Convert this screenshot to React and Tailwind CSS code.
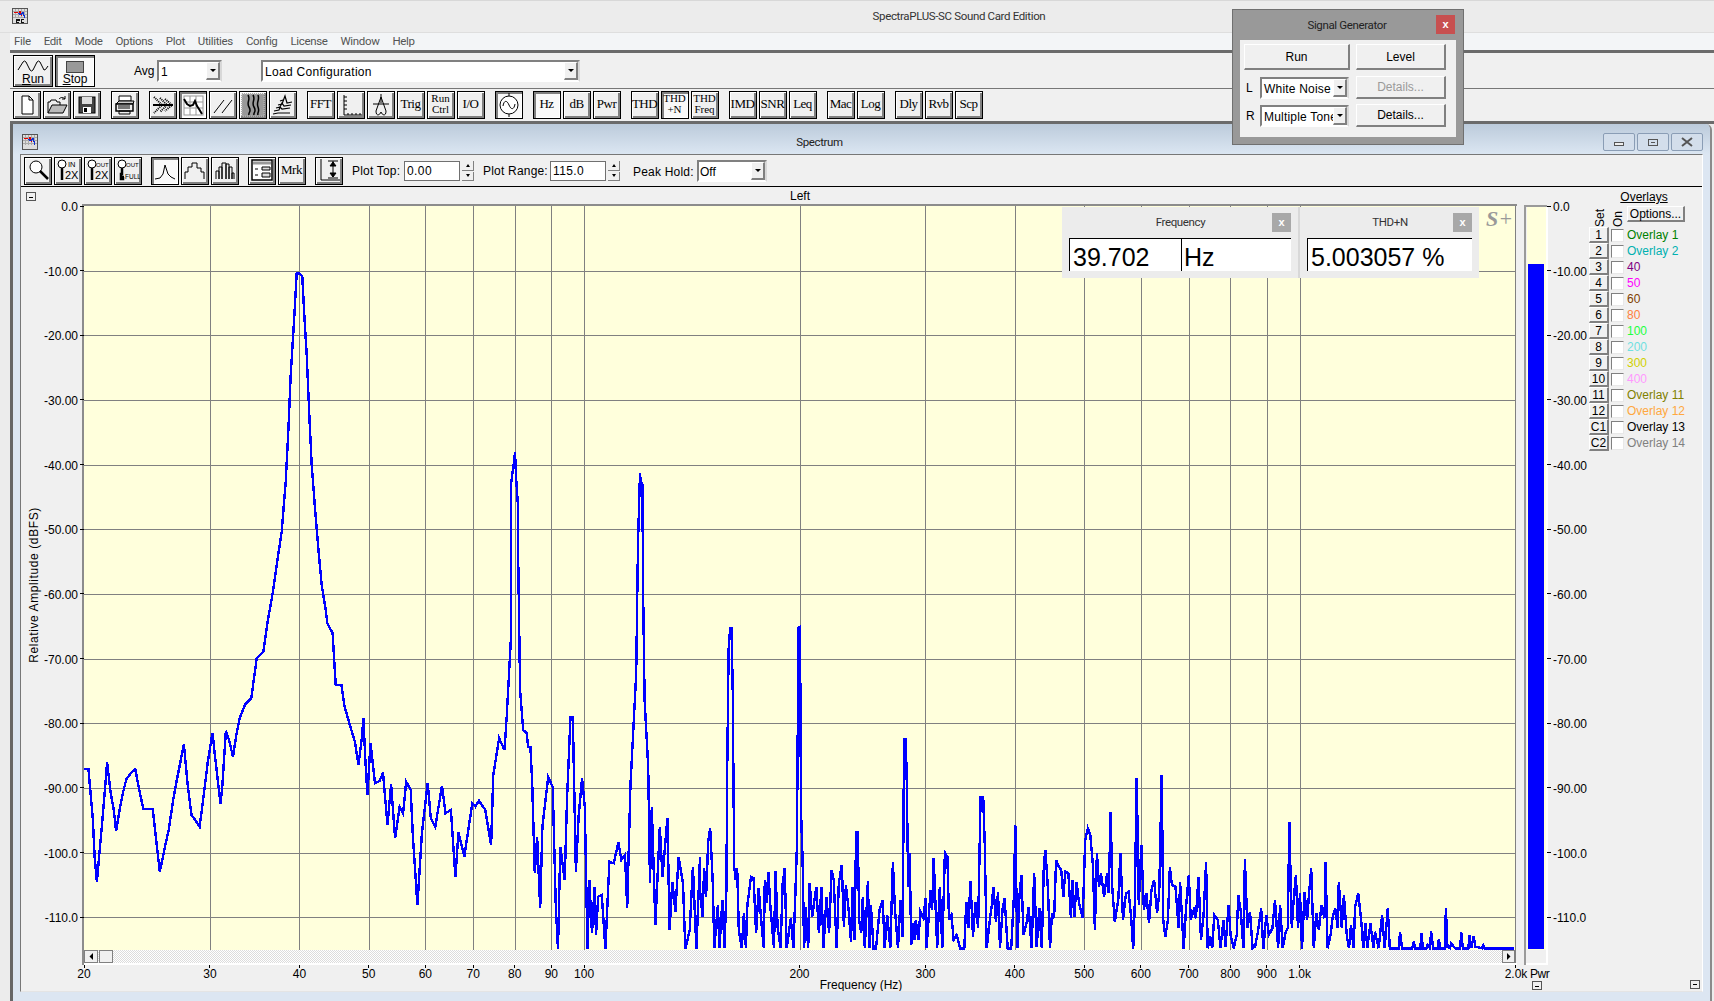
import React from 'react';

// trace points read off the plot, three stretches at different scales
const fromA = (p) => p.map(([x, y]) => [x / 2.24, 600 + y / 3]);
const fromB = (p) => p.map(([x, y]) => [270 + x / 3, 265 + y / 3]);
const fromC = (p) => p.map(([x, y]) => [700 + x / 1.96, 600 + y / 3]);

const trace = [
  ...fromA([[188,507],[198,507],[203,580],[208,660],[212,770],[217,845],[222,770],[230,650],[235,570],[240,487],[248,580],[255,630],[260,693],[268,630],[275,580],[283,538],[293,520],[303,508],[312,570],[321,627],[342,627],[350,720],[358,815],[368,750],[378,690],[388,600],[396,540],[405,480],[412,433],[420,550],[429,645],[440,665],[447,680],[455,600],[465,490],[476,398],[480,450],[487,530],[494,612],[498,560],[506,392],[513,420],[522,470],[530,400],[537,355],[549,313],[563,295],[575,175],[590,155],[600,60]]),
  ...fromB([[0,1030],[8,985],[20,900],[35,800],[47,650],[55,500],[62,330],[72,170],[80,25],[88,25],[97,35],[103,150],[110,270],[118,450],[125,600],[135,730],[145,850],[155,960],[168,1040]]),
  ...fromA([[733,68],[745,100],[752,255],[765,255],[772,320],[785,380],[795,425],[803,495],[810,420],[814,355],[818,470],[823,585],[830,430],[840,550],[850,543],[858,518],[868,675],[876,553],[885,715],[895,620],[903,640],[910,545],[920,570],[925,710],[935,915],[945,700],[958,548],[965,655],[975,680],[990,557],[998,640],[1010,630],[1020,830],[1027,697],[1040,770],[1058,610],[1065,620],[1073,602],[1087,630],[1100,735],[1105,525],[1118,415],[1130,450],[1135,350],[1145,100]]),
  ...fromB([[724,650],[732,590],[735,560],[738,632],[743,710],[745,900]]),
  ...fromA([[1165,270],[1172,390],[1180,400],[1183,440],[1188,440],[1192,540],[1198,820],[1203,710],[1210,925],[1215,680],[1228,532],[1238,560],[1245,920],[1250,1048],[1255,740],[1265,840],[1270,600],[1278,350],[1283,350],[1290,815],[1296,650],[1304,535],[1310,620],[1316,1048],[1320,840],[1326,1000],[1332,860],[1335,1005],[1340,890],[1348,885],[1356,1048],[1365,785],[1375,790],[1385,727],[1392,780],[1400,765],[1405,925],[1412,560],[1425,220]]),
  ...fromB([[1104,835],[1107,730],[1110,625],[1113,660],[1117,650],[1120,1020]]),
  ...fromA([[1444,300],[1452,500],[1456,850],[1460,620],[1468,975],[1478,680],[1484,830],[1495,655],[1500,990],[1506,845],[1513,935],[1520,770],[1530,850],[1535,1048],[1545,990],[1552,800],[1560,1048],[1568,770]]),
  ...fromC([[0,870],[5,950],[8,805],[12,890],[16,725],[20,685],[25,850],[28,1045],[35,915],[38,1045],[44,900],[48,1045],[52,860],[53,565],[56,150],[59,85],[62,85],[64,270],[67,800],[70,840],[73,805],[76,990],[82,1045],[86,940],[90,1045],[93,915],[100,830],[105,835],[110,1000],[115,865],[120,960],[125,1045],[127,840],[130,910],[134,815],[138,920],[145,1045],[148,812],[152,980],[158,1045],[162,850],[166,805],[170,1045],[178,955],[183,1045],[187,880],[190,740],[193,83],[196,80],[198,630],[201,780],[204,1045],[207,920],[212,1045],[215,850],[220,950],[228,860],[233,1000],[238,860],[242,1045],[248,890],[253,1000],[258,810],[262,840],[268,1045],[272,850],[278,795],[282,980],[286,855],[291,925],[296,1025],[299,860],[303,1020],[306,695],[309,695],[312,960],[316,1000],[319,890],[323,1045],[326,950],[329,842],[332,1045],[335,915],[340,1045],[345,1045],[352,930],[358,900],[362,1045],[367,945],[373,1045],[378,787],[382,925],[388,1045],[393,900],[397,1010],[400,418],[403,418],[405,515],[408,860],[411,760],[414,1035],[417,970],[420,1020],[423,960],[428,1020],[432,935],[438,955],[442,895],[444,1045],[452,870],[455,930],[458,775],[461,890],[465,1045],[470,860],[475,1045],[480,758],[485,770],[488,960],[493,945],[497,1020],[503,1005],[510,1045],[518,1045],[522,905],[526,985],[530,842],[535,1010],[540,905],[545,985],[550,590],[555,590],[558,730],[562,1045],[568,960],[572,915],[575,860],[580,965],[584,875],[588,1045],[593,925],[597,895],[603,1045],[610,1045],[615,895],[618,675],[622,1045],[626,890],[630,825],[634,1005],[640,970],[644,920],[650,1045],[655,820],[660,1040],[665,925],[670,1045],[674,790],[677,750],[682,870],[686,1045],[690,940],[694,955],[698,780],[703,800],[708,810],[712,890],[716,815],[722,820],[727,955],[730,840],[734,950],[738,845],[743,910],[750,955],[755,720],[760,685],[765,705],[770,795],[774,990],[778,758],[782,860],[786,820],[792,890],[798,820],[801,880],[805,635],[808,860],[813,965],[820,895],[824,758],[829,960],[835,880],[840,875],[845,950],[849,1048],[852,920],[856,535],[860,915],[865,735],[870,930],[875,880],[880,970],[885,870],[890,840],[896,940],[900,880],[905,525],[908,960],[912,1010],[917,960],[921,800],[925,855],[932,860],[938,985],[941,845],[948,1048],[953,915],[958,825],[962,960],[968,930],[972,955],[977,830],[982,1020],[987,945],[992,785],[995,1045],[1000,1010],[1004,1045],[1008,945],[1015,960],[1020,1045],[1026,960],[1030,1040],[1036,915],[1040,1005],[1046,1045],[1052,1005],[1055,885],[1060,935],[1065,1045],[1068,778],[1073,985],[1078,935],[1083,1045],[1088,1040],[1094,990],[1100,925],[1104,1048],[1110,945],[1115,1005],[1122,985],[1127,900],[1133,1045],[1137,915],[1142,1045],[1148,995],[1152,985],[1155,665],[1160,985],[1164,890],[1168,825],[1172,985],[1176,880],[1180,1048],[1185,875],[1190,960],[1194,875],[1198,805],[1203,1045],[1208,940],[1213,990],[1218,915],[1224,955],[1226,785],[1230,1045],[1236,1005],[1240,950],[1245,925],[1250,985],[1252,845],[1258,985],[1262,885],[1268,1010],[1272,1045],[1276,975],[1281,1045],[1284,920],[1290,880],[1296,960],[1300,1045],[1304,970],[1308,1045],[1314,970],[1320,1045],[1323,995],[1330,1045],[1337,945],[1342,1045],[1348,925],[1352,1045],[1370,1045],[1372,995],[1376,1045],[1396,1045],[1399,1025],[1402,1045],[1412,1045],[1414,1000],[1417,1045],[1424,1045],[1426,1035],[1431,1045],[1433,993],[1437,1045],[1446,1045],[1448,1018],[1451,1045],[1460,1045],[1462,925],[1465,1040],[1470,1045],[1472,1030],[1480,1045],[1490,1045],[1492,995],[1495,1045],[1506,1045],[1508,1005],[1512,1045],[1516,1008],[1520,1040],[1533,1045],[1535,1036],[1538,1045],[1595,1045]]),
];

const PLOT = { left: 84, right: 1515, top: 206, bottom: 950 };
const xOf = (f) => PLOT.left + 715.5 * Math.log10(f / 20);
const yOf = (db) => PLOT.top + 6.466 * db;

const gridFreqs = [30, 40, 50, 60, 70, 80, 90, 100, 200, 300, 400, 500, 600, 700, 800, 900, 1000];
const xLabels = [[20, '20'], [30, '30'], [40, '40'], [50, '50'], [60, '60'], [70, '70'], [80, '80'], [90, '90'], [100, '100'], [200, '200'], [300, '300'], [400, '400'], [500, '500'], [600, '600'], [700, '700'], [800, '800'], [900, '900'], [1000, '1.0k'], [2000, '2.0k']];
const dbLabels = [[0, '0.0'], [10, '-10.00'], [20, '-20.00'], [30, '-30.00'], [40, '-40.00'], [50, '-50.00'], [60, '-60.00'], [70, '-70.00'], [80, '-80.00'], [90, '-90.00'], [100, '-100.0'], [110, '-110.0']];

const overlays = [
  ['1', 'Overlay 1', 'text-[#008000]'],
  ['2', 'Overlay 2', 'text-[#00b0b0]'],
  ['3', '40', 'text-[#800080]'],
  ['4', '50', 'text-[#ff00ff]'],
  ['5', '60', 'text-[#804000]'],
  ['6', '80', 'text-[#ff8040]'],
  ['7', '100', 'text-[#20ff40]'],
  ['8', '200', 'text-[#70e0e0]'],
  ['9', '300', 'text-[#d0d000]'],
  ['10', '400', 'text-[#ff99ff]'],
  ['11', 'Overlay 11', 'text-[#808000]'],
  ['12', 'Overlay 12', 'text-[#ffa840]'],
  ['C1', 'Overlay 13', 'text-black'],
  ['C2', 'Overlay 14', 'text-[#808080]'],
];

const raised = 'bg-[#f0f0f0] border border-black shadow-[inset_1px_1px_0_#fff,inset_-2px_-2px_0_#808080]';
const pressed = 'bg-[#f9f9f9] border border-black shadow-[inset_2px_2px_0_#808080,inset_-1px_-1px_0_#fff]';
const flatBtn = 'bg-[#f0f0f0] border-t border-l border-t-white border-l-white border-b-2 border-r-2 border-b-[#808080] border-r-[#808080] flex items-center justify-center';
const uiFont = "font-['Roboto',sans-serif] text-[11.5px] tracking-[-0.35px]";

const Tb = ({ active, group, children }) => (
  <div className={`w-[28px] h-[28px] shrink-0 flex items-center justify-center ${active ? pressed : raised} ${group ? 'ml-[8px]' : ''}`}>
    {children}
  </div>
);

const Label = ({ lines }) => (
  <div className={`font-['Liberation_Serif',serif] text-center text-black pb-[2px] pr-[1px] ${lines.length > 1 ? 'text-[11px] leading-[11px]' : 'text-[13px] leading-[14px] tracking-[-0.5px]'}`}>
    {lines.map((l) => <div key={l}>{l}</div>)}
  </div>
);

const Ico = ({ children }) => (
  <svg width="24" height="24" viewBox="0 0 24 24" fill="none" stroke="black" strokeWidth="1" className="-mt-[1px] -ml-[1px]">
    {children}
  </svg>
);

const Dropdown = ({ className }) => (
  <div className={`w-[14px] bg-[#f0f0f0] border-t border-l border-t-white border-l-white border-b-2 border-r-2 border-b-[#808080] border-r-[#808080] flex items-center justify-center shrink-0 ${className || ''}`}>
    <div className="w-0 h-0 border-l-[3px] border-r-[3px] border-t-[3px] border-l-transparent border-r-transparent border-t-black" />
  </div>
);

const Combo = ({ value, className, textClass }) => (
  <div className={`flex bg-white border-2 border-t-[#808080] border-l-[#808080] border-r-[#d8d8d8] border-b-[#fff] ${className}`}>
    <div className={`flex-1 overflow-hidden whitespace-nowrap px-[1px] text-[12px] leading-[20px] text-black ${textClass || ''}`}>{value}</div>
    <Dropdown />
  </div>
);

const Spin = () => (
  <div className="w-[12px] h-[20px] mt-[1px] flex flex-col gap-[1px] shrink-0">
    <div className="flex-1 bg-[#f0f0f0] border-b border-r border-[#808080] flex items-center justify-center">
      <div className="w-0 h-0 border-l-[2px] border-r-[2px] border-b-[3px] border-l-transparent border-r-transparent border-b-black" />
    </div>
    <div className="flex-1 bg-[#f0f0f0] border-b border-r border-[#808080] flex items-center justify-center">
      <div className="w-0 h-0 border-l-[2px] border-r-[2px] border-t-[3px] border-l-transparent border-r-transparent border-t-black" />
    </div>
  </div>
);

const AppIcon = ({ sc }) => (
  <svg width="16" height="16" viewBox="0 0 16 16" shapeRendering="crispEdges" className="shrink-0">
    <rect x="0.5" y="0.5" width="15" height="15" fill="#ddd" stroke="#555" />
    <path d="M3 1v10M6 1v10M9 1v10M12 1v10M1 3h14M1 6h14M1 9h14" stroke="#aaa" />
    <path d="M2 5l3-1 2 2 1-3 2 5" stroke="#e00000" fill="none" />
    <path d="M6 5l3 2 2-3 2 7" stroke="#1030d0" fill="none" />
    {sc && <rect x="3" y="10" width="10" height="5" fill="#ddd" />}
    {sc && <path d="M4 11h3v1H4v2h3M12 11H9v3h3" stroke="#111" fill="none" />}
  </svg>
);

const Grid2 = () => (
  <Ico>
    <rect x="3" y="3" width="19" height="19" fill="white" stroke="#999" />
    <path d="M9 3v19M15 3v19M3 9h19M3 15h19" stroke="#999" />
    <path d="M3 6l3 5 3 2 3-1 2-4 2 5 2 3 3 5" strokeWidth="2" />
  </Ico>
);

const Zoomer = ({ top, bottom, key2 }) => (
  <Ico>
    <circle cx="6" cy="6" r="4" fill="white" />
    <path d={key2 ? 'M6 10v6H5v5h2v-2h1' : 'M6 10v12'} strokeWidth="2.5" />
    <text x={top === 'IN' ? 12 : 10} y="9" fontSize={top === 'IN' ? 7.5 : 6} fontFamily="Liberation Sans" fill="black" stroke="none">{top}</text>
    <text x="9" y="21" fontSize={bottom === 'FULL' ? 6.5 : 11} fontFamily="Liberation Sans" fill="black" stroke="none">{bottom}</text>
  </Ico>
);

const Chart = () => (
  <svg width="1567" height="805" viewBox="21 187 1567 805" className="shrink-0 block" fontFamily="Liberation Sans" fontSize="12">
    <defs>
      <pattern id="dither" width="2" height="2" patternUnits="userSpaceOnUse">
        <rect width="2" height="2" fill="#ffffff" />
        <rect width="1" height="1" fill="#dcdcdc" />
        <rect x="1" y="1" width="1" height="1" fill="#dcdcdc" />
      </pattern>
      <clipPath id="plotClip"><rect x={PLOT.left} y={PLOT.top} width={PLOT.right - PLOT.left} height={PLOT.bottom - PLOT.top} /></clipPath>
    </defs>
    <text x="800" y="200" textAnchor="middle" fill="black">Left</text>
    <rect x="26.5" y="192.5" width="9" height="8" fill="#f0f0f0" stroke="#555" shapeRendering="crispEdges" />
    <path d="M29 197h4" stroke="black" shapeRendering="crispEdges" />

    <rect x={PLOT.left} y={PLOT.top} width={PLOT.right - PLOT.left} height={PLOT.bottom - PLOT.top} fill="#ffffdc" />
    <path d="M83 205V965M82 205H1517" stroke="#8c8c8c" strokeWidth="2" shapeRendering="crispEdges" />
    <g stroke="#808080" shapeRendering="crispEdges">
      {gridFreqs.map((f) => <line key={f} x1={Math.round(xOf(f)) + 0.5} x2={Math.round(xOf(f)) + 0.5} y1={PLOT.top} y2={PLOT.bottom} />)}
      {dbLabels.slice(1).map(([d]) => <line key={d} x1={PLOT.left} x2={PLOT.right} y1={Math.round(yOf(d)) + 0.5} y2={Math.round(yOf(d)) + 0.5} />)}
      <line x1="1515.5" x2="1515.5" y1={PLOT.top} y2="965" />
    </g>
    <polyline clipPath="url(#plotClip)" points={trace.map(([x, y]) => `${x.toFixed(1)},${y.toFixed(1)}`).join(' ')} fill="none" stroke="#0000ff" strokeWidth="2.4" shapeRendering="crispEdges" />

    {/* scroll bar under the plot */}
    <rect x="84" y="950" width="1431" height="13" fill="url(#dither)" />
    <rect x="84" y="963" width="1433" height="2" fill="#ffffff" />
    <rect x="84.5" y="950.5" width="13" height="12" fill="#f0f0f0" stroke="#808080" />
    <path d="M93 953v7l-3.5-3.5z" fill="black" />
    <rect x="99.5" y="950.5" width="13" height="12" fill="#f0f0f0" stroke="#808080" />
    <rect x="1502.5" y="950.5" width="12" height="12" fill="#f0f0f0" stroke="#808080" />
    <path d="M1507 953v7l3.5-3.5z" fill="black" />

    {/* axis labels */}
    {dbLabels.map(([d, t]) => (
      <g key={d}>
        <line x1="80" x2="84" y1={yOf(d)} y2={yOf(d)} stroke="black" shapeRendering="crispEdges" />
        <text x="78" y={yOf(d) + 5} textAnchor="end" fill="black">{t}</text>
      </g>
    ))}
    {xLabels.map(([f, t]) => (
      <g key={f}>
        <line x1={xOf(f)} x2={xOf(f)} y1="965" y2="968" stroke="black" shapeRendering="crispEdges" />
        <text x={f === 2000 ? 1516 : xOf(f)} y="978" textAnchor="middle" fill="black">{t}</text>
      </g>
    ))}
    <text x="0" y="0" transform="translate(38,585) rotate(-90)" textAnchor="middle" fill="black" letterSpacing="0.6">Relative Amplitude (dBFS)</text>
    <text x="861" y="989" textAnchor="middle" fill="black">Frequency (Hz)</text>

    {/* level meter */}
    <rect x="1527" y="206" width="19" height="744" fill="#ffffdc" />
    <rect x="1527" y="950" width="19" height="13" fill="#f0f0f0" />
    <rect x="1524" y="205" width="23" height="2" fill="#9a9a9a" />
    <rect x="1524" y="205" width="2" height="760" fill="#9a9a9a" />
    <rect x="1546" y="207" width="2" height="758" fill="#ffffff" />
    <rect x="1526" y="963" width="22" height="2" fill="#ffffff" />
    <rect x="1528" y="264" width="16" height="685" fill="#0000ff" />
    {dbLabels.map(([d, t]) => (
      <g key={d}>
        <line x1="1547" x2="1551" y1={yOf(d)} y2={yOf(d)} stroke="black" shapeRendering="crispEdges" />
        <text x="1553" y={yOf(d) + 5} fill="black">{t}</text>
      </g>
    ))}
    <text x="1530" y="978" fill="black" letterSpacing="-0.4">Pwr</text>
    <rect x="1532.5" y="981.5" width="9" height="8" fill="#f0f0f0" stroke="#555" shapeRendering="crispEdges" />
    <path d="M1535 986h4" stroke="black" shapeRendering="crispEdges" />
  </svg>
);

const OverlayPanel = () => (
  <div className="flex-1 flex flex-col h-[804px] text-[12px] text-black">
    <div className="h-[18px] pt-[2px] w-[112px] text-center leading-[16px] underline">Overlays</div>
    <div className="h-[22px] flex items-end">
      <div className="w-[21px] ml-[1px] flex justify-center"><span className="[writing-mode:vertical-rl] rotate-180 leading-[14px]">Set</span></div>
      <div className="w-[15px] flex justify-center"><span className="[writing-mode:vertical-rl] rotate-180 leading-[14px]">On</span></div>
      <div className={`w-[58px] h-[16px] ml-[2px] mb-[5px] leading-[12px] ${flatBtn}`}>Options...</div>
    </div>
    {overlays.map(([n, label, color]) => (
      <div key={n} className="h-[16px] flex items-center ml-[1px]">
        <div className={`w-[20px] h-[16px] ${flatBtn} leading-[12px]`}>{n}</div>
        <div className="w-[13px] h-[13px] ml-[2px] bg-white border border-[#808080] border-r-[#e8e8e8] border-b-[#e8e8e8]" />
        <span className={`ml-[3px] ${color}`}>{label}</span>
      </div>
    ))}
    <div className="mt-auto mb-[2px] ml-[102px] w-[10px] h-[9px] bg-[#f0f0f0] border border-[#555] flex items-center justify-center">
      <div className="w-[4px] h-[1px] bg-black" />
    </div>
  </div>
);

const ReadoutClose = () => (
  <div className="w-[19px] h-[19px] bg-[#a8a8a8] flex items-center justify-center text-white text-[11px] font-bold leading-none shrink-0">x</div>
);

const App = () => (
  <div className="relative w-[1714px] h-[1001px] overflow-hidden bg-[#ececec] font-['Liberation_Sans',sans-serif] text-black">
    {/* app title bar */}
    <div className="h-[33px] border-t border-t-[#d8d8d8] border-b border-b-[#dedede] flex items-center">
      <div className="ml-[12px] shrink-0 -mt-[1px]"><AppIcon sc /></div>
      <div className={`flex-1 text-center pl-[176px] mt-[1px] text-[#333] ${uiFont}`}>SpectraPLUS-SC Sound Card Edition</div>
    </div>

    <div className="pl-[10px]">
      {/* menu */}
      <div className={`h-[17px] bg-[#f3f5f7] flex items-center gap-[13px] pl-[4px] text-[#555] ${uiFont}`}>
        {['File', 'Edit', 'Mode', 'Options', 'Plot', 'Utilities', 'Config', 'License', 'Window', 'Help'].map((m) => <span key={m}>{m}</span>)}
      </div>
      <div className="h-[3px] bg-[#6b6b6b]" />

      {/* run / config bar */}
      <div className="h-[36px] bg-[#f0f0f0] border-b border-[#777] flex items-center pl-[3px]">
        <div className={`w-[40px] h-[32px] flex flex-col items-center ${raised}`}>
          <svg width="32" height="16" viewBox="0 0 32 16" fill="none" stroke="black" className="mt-[1px]">
            <path d="M1 13L6 5Q7.5 3 9 5L13 13Q14.5 15 16 13L20 5Q21.5 3 23 5L27 13Q28 14 31 9" />
          </svg>
          <span className="text-[12px] leading-[13px]"><span className="underline">R</span>un</span>
        </div>
        <div className={`w-[40px] h-[32px] ml-[2px] flex flex-col items-center ${pressed}`}>
          <div className="w-[18px] h-[12px] mt-[5px] bg-[#999] border border-[#444]" />
          <span className="text-[12px] leading-[13px]"><span className="underline">S</span>top</span>
        </div>
        <span className="ml-[39px] mt-[1px] text-[12px] w-[23px]">Avg</span>
        <Combo value="1" className="w-[65px] h-[22px]" textClass="pl-[2px]" />
        <Combo value="Load Configuration" className="ml-[39px] w-[319px] h-[22px]" textClass="tracking-[0.3px] pl-[2px]" />
      </div>

      {/* main tool bar */}
      <div className="h-[32px] bg-[#f0f0f0] flex items-center gap-[2px] pl-[3px]">
        <Tb><Ico><path d="M7 3h7l4 4v14H7z" fill="white" /><path d="M14 3v4h4" /></Ico></Tb>
        <Tb>
          <Ico>
            <path d="M3 20V9h2l1-2h5l1 2h3v3" fill="#eee" />
            <path d="M3 20l4-8h15l-4 8z" fill="#bbb" />
            <path d="M14 6c2-2 4-2 6 0M20 3v3h-3" />
          </Ico>
        </Tb>
        <Tb>
          <Ico>
            <rect x="4" y="4" width="16" height="16" fill="#444" />
            <rect x="7" y="4" width="10" height="7" fill="#ddd" stroke="none" />
            <rect x="8" y="14" width="8" height="6" fill="#fff" stroke="none" />
            <rect x="9" y="15" width="3" height="4" fill="#000" stroke="none" />
          </Ico>
        </Tb>
        <Tb group>
          <Ico>
            <path d="M6 3l12 0 0 5-12 0z" fill="white" />
            <path d="M3 11l3-3h15l-1 3z" fill="#ccc" />
            <rect x="3" y="11" width="17" height="7" fill="#eee" strokeWidth="1.5" />
            <path d="M6 18h11v3H6zM5 13h12M5 15h12" />
          </Ico>
        </Tb>
        <Tb group>
          <Ico>
            <path d="M2 12h20" strokeWidth="2" />
            <path d="M3 4l8 8-8 8M9 5l7 7-7 7M14 6l7 6-7 6" strokeDasharray="1 1" strokeWidth="2" />
          </Ico>
        </Tb>
        <Tb active><Grid2 /></Tb>
        <Tb><Ico><path d="M3 20L13 7M11 20L21 7" /></Ico></Tb>
        <Tb>
          <Ico>
            <rect x="1" y="1" width="22" height="22" fill="#999" stroke="#aaa" strokeDasharray="1 1" strokeWidth="2" />
            <path d="M7 2c3 5-2 7 1 12s-1 5 0 8M12 2c3 5-2 7 1 12s-1 5 0 8M17 2c2 5-2 7 0 12s-1 5 0 8" strokeWidth="1.5" />
          </Ico>
        </Tb>
        <Tb>
          <Ico>
            <path d="M2 21l5-1h12M3 18l5-1 1-3 2 2 8-1M5 15l4-1 2-4 2 3 7-1M7 12l4-1 3-8 2 7 5-1M9 8l3-1" strokeWidth="1.2" />
          </Ico>
        </Tb>
        <Tb group><Label lines={['FFT']} /></Tb>
        <Tb><Ico><path d="M5 2v20h18" strokeWidth="1" /><path d="M5 4h3M5 8h3M5 12h3M5 16h3M9 22v-2M13 22v-2M17 22v-2M21 22v-2" /></Ico></Tb>
        <Tb><Ico><path d="M12 1v9M4 11h16M12 4L7 18M12 4l5 14" /><path d="M7 18c0 6 4 4 5 1 1 3 5 5 5-1" /></Ico></Tb>
        <Tb><Label lines={['Trig']} /></Tb>
        <Tb><Label lines={['Run', 'Ctrl']} /></Tb>
        <Tb><Label lines={['I/O']} /></Tb>
        <Tb group active>
          <Ico>
            <circle cx="12" cy="12" r="9" fill="white" />
            <path d="M12 0v3M12 21v3M6 13c1-6 4-6 6-1s5 5 6-1" />
          </Ico>
        </Tb>
        <Tb group active><Label lines={['Hz']} /></Tb>
        <Tb><Label lines={['dB']} /></Tb>
        <Tb><Label lines={['Pwr']} /></Tb>
        <Tb group><Label lines={['THD']} /></Tb>
        <Tb active><Label lines={['THD', '+N']} /></Tb>
        <Tb><Label lines={['THD', 'Freq']} /></Tb>
        <Tb group><Label lines={['IMD']} /></Tb>
        <Tb><Label lines={['SNR']} /></Tb>
        <Tb><Label lines={['Leq']} /></Tb>
        <Tb group><Label lines={['Mac']} /></Tb>
        <Tb><Label lines={['Log']} /></Tb>
        <Tb group><Label lines={['Dly']} /></Tb>
        <Tb><Label lines={['Rvb']} /></Tb>
        <Tb><Label lines={['Scp']} /></Tb>
      </div>
      <div className="h-[3px] bg-[#6b6b6b]" />

      {/* Spectrum window */}
      <div className="w-[1702px] h-[877px] bg-[#dce6f2] border-l-[3px] border-l-[#666] border-r-2 border-r-[#8a8a8a] rounded-tr-[6px] overflow-hidden">
        <div className="h-[30px] pt-[6px] bg-gradient-to-b from-[#bccbdb] to-[#dbe6f2] flex items-center pl-[9px] pr-[7px]">
          <AppIcon />
          <div className={`flex-1 text-center mt-[1px] text-[#222] ${uiFont}`}>Spectrum</div>
          {['min', 'max', 'close'].map((b) => (
            <div key={b} className="w-[32px] h-[18px] ml-[2px] rounded-[2px] border border-[#8a9db5] bg-[#d3deeb] flex items-center justify-center">
              {b === 'min' && <div className="w-[10px] h-[4px] border border-[#555] bg-[#eee] mt-[3px]" />}
              {b === 'max' && <div className="w-[10px] h-[7px] border border-[#555] flex items-center justify-center"><div className="w-[4px] h-[1px] bg-[#555]" /></div>}
              {b === 'close' && (
                <svg width="12" height="10" viewBox="0 0 12 10" stroke="#555" strokeWidth="2"><path d="M1 1l10 8M11 1L1 9" /></svg>
              )}
            </div>
          ))}
        </div>
        <div className="mx-[7px] h-[838px] bg-[#f0f0f0] border-t border-l border-t-[#777] border-l-[#777] border-r border-r-white border-b border-b-[#e4e4e4] overflow-hidden">
          {/* plot tool bar */}
          <div className="h-[32px] border-b border-black flex items-center gap-[2px] pl-[3px] text-[12px] overflow-hidden">
            <Tb>
              <Ico>
                <circle cx="10" cy="9" r="6" fill="white" />
                <path d="M14 13l8 8" strokeWidth="2.5" />
              </Ico>
            </Tb>
            <Tb><Zoomer top="IN" bottom="2X" /></Tb>
            <Tb><Zoomer top="OUT" bottom="2X" /></Tb>
            <Tb><Zoomer top="OUT" bottom="FULL" key2 /></Tb>
            <div className="ml-[7px]"><Tb active><Ico><path d="M2 21l5-1 3-4 2-9 3 9 3 3 4 2" /></Ico></Tb></div>
            <Tb><Ico><path d="M2 21v-7h3v-5h4v-4h5v5h4v4h3v7" /></Ico></Tb>
            <Tb><Ico><path d="M3 21v-8h3v8M6 21V9h3v12M9 21V5h4v16M13 21V6h3v15M16 21V9h3v12M19 21v-6h2v6" /></Ico></Tb>
            <div className="ml-[7px]">
              <Tb>
                <Ico>
                  <rect x="2" y="2" width="20" height="20" fill="white" strokeWidth="1.5" />
                  <path d="M3 5h18" strokeWidth="3" stroke="#999" />
                  <path d="M12 9h8v3h-8zM12 15h8v4h-8zM5 11h3M5 17h3" fill="#ddd" />
                </Ico>
              </Tb>
            </div>
            <Tb><Label lines={['Mrk']} /></Tb>
            <div className="ml-[7px]">
              <Tb>
                <Ico>
                  <path d="M4 1v21h19" />
                  <path d="M11 3h10M16 3v16M11 20h10" />
                  <path d="M13 8l3-4 3 4zM13 15l3 4 3-4z" fill="black" />
                </Ico>
              </Tb>
            </div>
            <span className="ml-[7px] mt-[1px] tracking-[0.2px] w-[50px]">Plot Top:</span>
            <div className="w-[56px] h-[20px] mt-[1px] bg-white border border-[#707070] leading-[18px] pl-[2px] tracking-[0.4px]">0.00</div>
            <Spin />
            <span className="ml-[7px] mt-[1px] tracking-[0.2px] w-[65px]">Plot Range:</span>
            <div className="w-[56px] h-[20px] mt-[1px] bg-white border border-[#707070] leading-[18px] pl-[2px] tracking-[0.4px]">115.0</div>
            <Spin />
            <span className="ml-[11px] mt-[2px] tracking-[0.2px] w-[62px]">Peak Hold:</span>
            <Combo value="Off" className="w-[70px] h-[22px] mt-[1px]" />
          </div>

          <div className="flex h-[805px]">
            <Chart />
            <OverlayPanel />
          </div>
        </div>
      </div>
    </div>

    {/* floating readouts over the plot */}
    <div className="absolute left-[1062px] top-[207px] w-[417px] h-[71px] flex gap-[2px] bg-[#d8d8d8]">
      <div className="w-[236px] bg-[#ececec] flex flex-col">
        <div className="h-[31px] flex items-center pl-[27px] pr-[7px]">
          <span className={`flex-1 text-center mt-[1px] text-[#333] ${uiFont}`}>Frequency</span>
          <ReadoutClose />
        </div>
        <div className="mx-[7px] h-[33px] flex bg-white border-t border-l border-black text-[25px] leading-[36px] overflow-hidden">
          <div className="w-[112px] border-r border-black pl-[3px]">39.702</div>
          <div className="flex-1 pl-[2px]">Hz</div>
        </div>
      </div>
      <div className="flex-1 bg-[#ececec] flex flex-col">
        <div className="h-[31px] flex items-center pl-[27px] pr-[7px]">
          <span className={`flex-1 text-center mt-[1px] text-[#333] ${uiFont}`}>THD+N</span>
          <ReadoutClose />
        </div>
        <div className="mx-[7px] h-[33px] bg-white border-t border-l border-black text-[25px] leading-[36px] pl-[3px] whitespace-nowrap overflow-hidden">5.003057 %</div>
      </div>
    </div>
    <div className="absolute left-[1486px] top-[206px] font-['Liberation_Serif',serif] italic text-[22px] leading-[26px] text-[#999]">
      <span className="font-bold">S</span>+
    </div>

    {/* Signal Generator dialog */}
    <div className="absolute left-[1232px] top-[9px] w-[232px] h-[136px] bg-[#999] border border-[#707070] flex flex-col">
      <div className="h-[30px] pt-[1px] flex items-center relative shrink-0">
        <span className={`flex-1 text-center text-[#222] pr-[2px] ${uiFont}`}>Signal Generator</span>
        <div className="absolute right-[8px] top-[5px] w-[19px] h-[19px] bg-[#c75050] text-white text-[11px] font-bold flex items-center justify-center">x</div>
      </div>
      <div className="mx-[7px] h-[97px] bg-[#f0f0f0] p-[4px] text-[12px] flex flex-col gap-[6px] shrink-0">
        <div className="flex gap-[6px]">
          <div className={`w-[106px] h-[26px] ${flatBtn}`}>Run</div>
          <div className={`w-[90px] h-[26px] ${flatBtn}`}>Level</div>
        </div>
        <div className="flex items-center h-[23px]">
          <span className="w-[16px] pl-[2px]">L</span>
          <Combo value="White Noise" className="w-[89px] h-[22px]" textClass="tracking-[0.2px] pl-[2px]" />
          <div className={`w-[90px] h-[23px] ml-[7px] text-[#9a9a9a] ${flatBtn}`}>Details...</div>
        </div>
        <div className="flex items-center h-[23px] -mt-[1px]">
          <span className="w-[16px] pl-[2px]">R</span>
          <Combo value="Multiple Tone" className="w-[89px] h-[22px]" textClass="tracking-[0.2px] pl-[2px]" />
          <div className={`w-[90px] h-[23px] ml-[7px] ${flatBtn}`}>Details...</div>
        </div>
      </div>
    </div>
  </div>
);

export default App;
